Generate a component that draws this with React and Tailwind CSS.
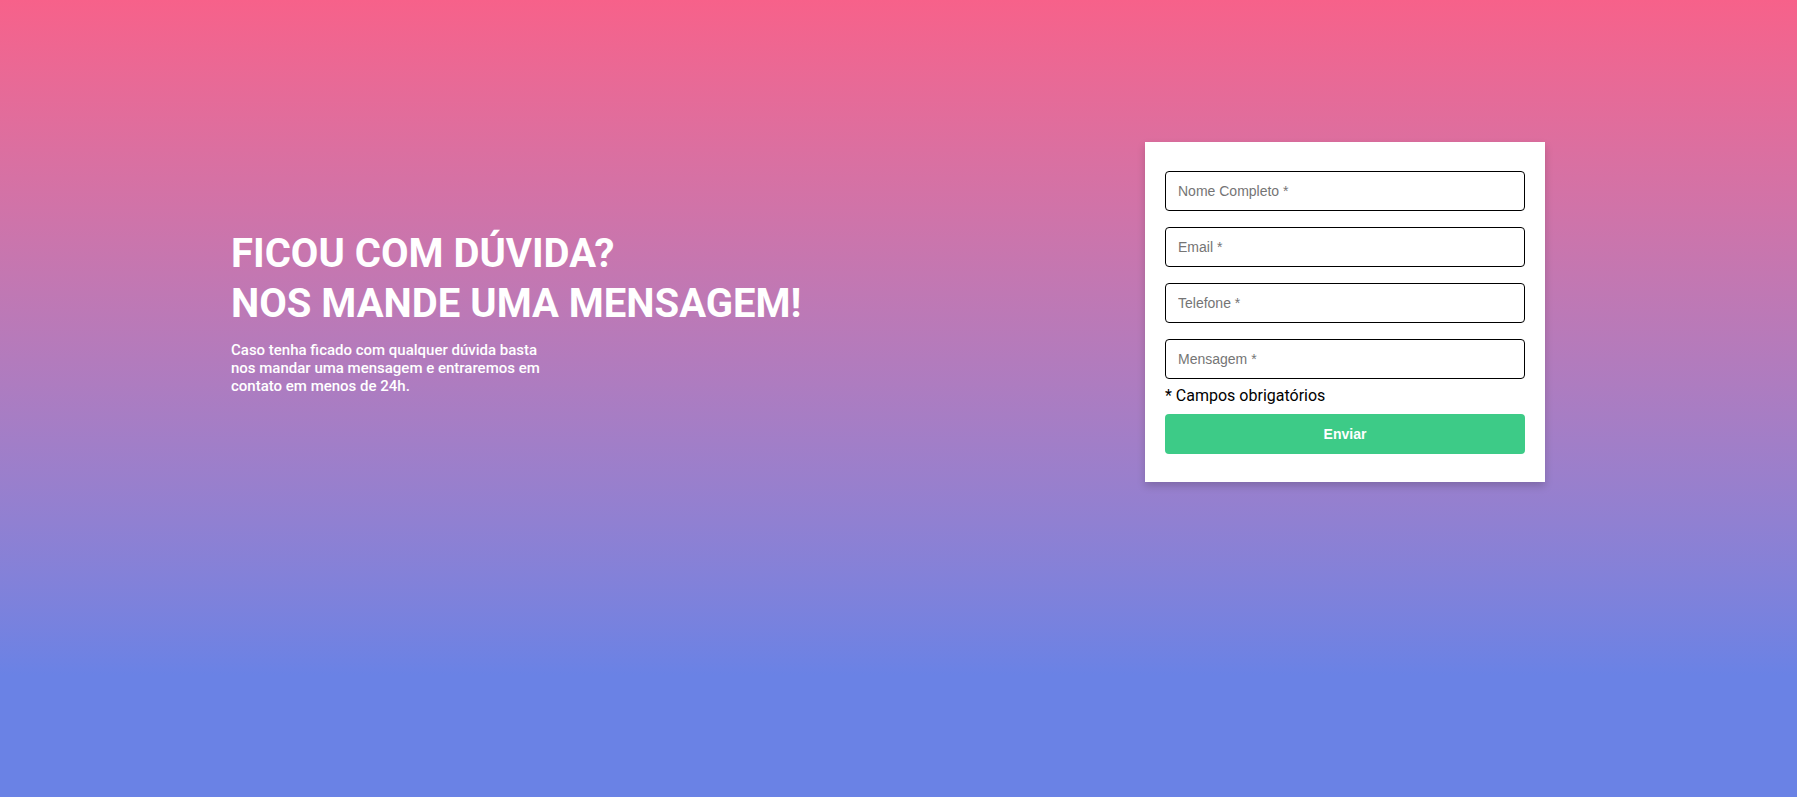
import React from 'react';

const fields = ['Nome Completo *', 'Email *', 'Telefone *', 'Mensagem *'];

const App = () => {
    return (
        <div className="min-h-[797px] bg-[#6a82e5] font-['Roboto',sans-serif]">
            <section className="h-[675px] bg-gradient-to-b from-[#f7618a] to-[#6a82e5]">
                <div className="flex items-start justify-between pl-[231px] pr-[252px] pt-[142px]">
                    {/* Texto */}
                    <div className="pt-[87px] text-white">
                        <h1 className="text-[40px] font-bold leading-[50px]">
                            FICOU COM DÚVIDA?
                            <br />
                            NOS MANDE UMA MENSAGEM!
                        </h1>
                        <p className="mt-[12px] max-w-[315px] text-[15px] font-medium leading-[18px]">
                            Caso tenha ficado com qualquer dúvida basta nos mandar uma mensagem e entraremos em contato em menos de 24h.
                        </p>
                    </div>

                    {/* Formulário */}
                    <form className="w-[400px] bg-white px-[20px] pt-[29px] pb-[28px] shadow-[0_4px_8px_rgba(0,0,0,0.18)]">
                        <div className="flex flex-col gap-[16px]">
                            {fields.map((f) => (
                                <input
                                    key={f}
                                    type="text"
                                    placeholder={f}
                                    className="h-[40px] w-full rounded-[4px] border border-black px-[12px] font-['Liberation_Sans',Arial,sans-serif] text-[14px] text-black outline-none placeholder:text-[#757575]"
                                />
                            ))}
                        </div>
                        <p className="mt-[7px] text-[16px] leading-[20px] text-black">* Campos obrigatórios</p>
                        <button
                            type="button"
                            className="mt-[8px] h-[40px] w-full rounded-[4px] bg-[#3dcb87] font-['Liberation_Sans',Arial,sans-serif] text-[14px] font-bold text-white"
                        >
                            Enviar
                        </button>
                    </form>
                </div>
            </section>
        </div>
    );
};

export default App;
